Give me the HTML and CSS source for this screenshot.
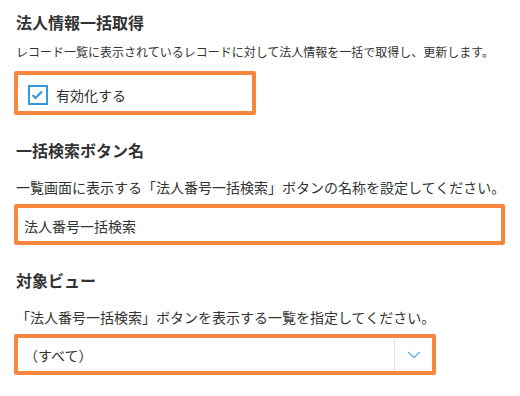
FILE: index.html
```html
<!DOCTYPE html>
<html lang="ja">
<head>
	<meta charset="UTF-8">
	<title>設定</title>
	<link rel="stylesheet" href="styles.css">
</head>
<body>
	<main class="config">
		<section class="row first">
			<h2 class="label">法人情報一括取得</h2>
			<p class="desc small">レコード一覧に表示されているレコードに対して法人情報を一括で取得し、更新します。</p>
			<div class="mark check-wrap">
				<span class="checkbox">
					<svg width="16" height="16" viewBox="0 0 16 16"><polyline points="2.5,8 5.5,11 12,4.5" fill="none" stroke="#3498db" stroke-width="2.2"/></svg>
				</span>
				<span class="check-text">有効化する</span>
			</div>
		</section>
		<section class="row">
			<h2 class="label">一括検索ボタン名</h2>
			<p class="desc">一覧画面に表示する「法人番号一括検索」ボタンの名称を設定してください。</p>
			<div class="mark text-wrap">法人番号一括検索</div>
		</section>
		<section class="row">
			<h2 class="label">対象ビュー</h2>
			<p class="desc">「法人番号一括検索」ボタンを表示する一覧を指定してください。</p>
			<div class="mark select-wrap">
				<span class="select-value">（すべて）</span>
				<span class="select-btn">
					<svg width="14" height="8" viewBox="0 0 14 8"><polyline points="1,1 7,6.5 13,1" fill="none" stroke="#72b4e3" stroke-width="1.6"/></svg>
				</span>
			</div>
		</section>
	</main>
</body>
</html>
```

FILE: styles.css
```css
body {
	margin: 0;
	background: #fff;
	color: #333;
	font-family: "Noto Sans CJK JP", "Noto Sans", sans-serif;
}
main.config {
	padding: 0 14px;
}
section.row {
	margin-top: 25px;
}
section.row.first {
	margin-top: 12px;
}
h2.label {
	font-size: 16px;
	font-weight: bold;
	line-height: 20px;
	margin: 0;
	padding-left: 2px;
	color: #333;
}
p.desc {
	font-size: 14px;
	line-height: 20px;
	margin: 17px 0 7px 0;
	padding-left: 2px;
	color: #333;
}
p.desc.small {
	font-size: 12px;
	line-height: 18px;
	margin: 11px 0 10px 0;
}

/* orange highlighted inputs */
.mark {
	border: 4px solid #f7873d;
	border-radius: 2px;
	box-sizing: border-box;
	background: #fff;
}
.check-wrap {
	width: 242px;
	height: 44px;
	display: flex;
	align-items: center;
	padding: 4px 0 0 10px;
}
.checkbox {
	width: 20px;
	height: 20px;
	box-sizing: border-box;
	border: 2px solid #3498db;
	display: flex;
	align-items: center;
	justify-content: center;
}
.check-text {
	font-size: 14px;
	margin-left: 8px;
	color: #333;
}
.text-wrap {
	width: 491px;
	height: 41px;
	font-size: 14px;
	display: flex;
	align-items: center;
	padding: 3px 0 0 6px;
	color: #333;
}
.select-wrap {
	width: 422px;
	height: 41px;
	display: flex;
	align-items: stretch;
	font-size: 14px;
	color: #333;
}
.select-value {
	flex: 1;
	display: flex;
	align-items: center;
	padding-left: 6px;
}
.select-btn {
	width: 37px;
	border-left: 1px solid #e3e3e3;
	display: flex;
	align-items: center;
	justify-content: center;
}
```
